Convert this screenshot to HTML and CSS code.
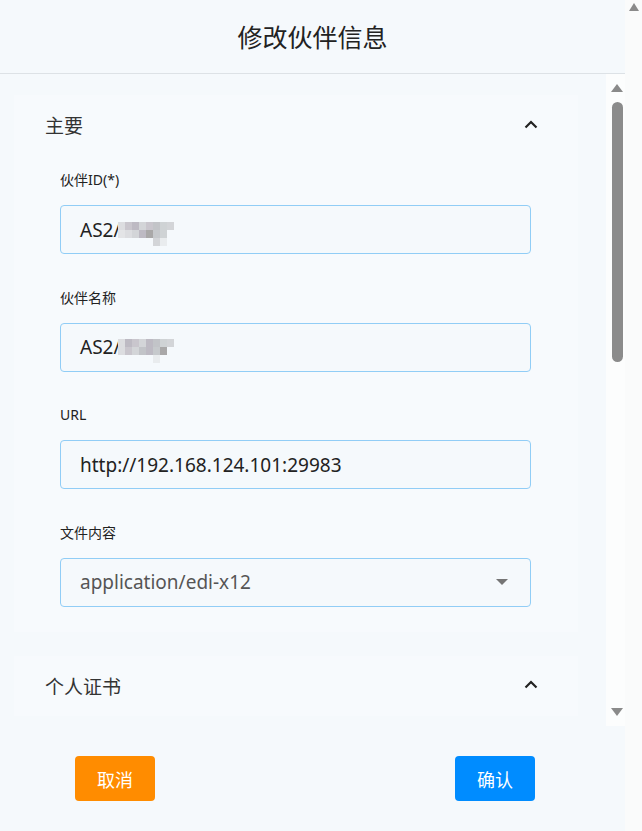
FILE: index.html
```html
<!DOCTYPE html>
<html lang="zh">
<head>
<meta charset="utf-8">
<title>修改伙伴信息</title>
<link rel="stylesheet" href="styles.css">
</head>
<body>
<div class="window">
  <div class="main">
    <header class="header"><h1 class="title">修改伙伴信息</h1></header>
    <div class="scroll-area">
      <div class="content">
        <section class="card">
          <div class="card-head">
            <span class="card-title">主要</span>
            <svg class="chev" width="14" height="9" viewBox="0 0 14 9"><polyline points="1.5,7.5 7,2 12.5,7.5" fill="none" stroke="#222" stroke-width="2.2"/></svg>
          </div>
          <div class="fields">
            <div class="field">
              <label class="label">伙伴ID(*)</label>
              <div class="input"><span class="val">AS2/</span><span class="mosaic"><i class="c1"></i><i class="c2"></i><i class="c3"></i><i class="c4"></i><i class="c2"></i><i class="c5"></i><i class="c6"></i><i class="c4"></i><i class="c7"></i><i class="c1"></i><i class="c4"></i><i class="c3"></i><i class="c8"></i><i class="c9"></i><i class="c6"></i><i class="n"></i><i class="n"></i><i class="n"></i><i class="n"></i><i class="n"></i><i class="n"></i><i class="c4"></i><i class="c10"></i><i class="n"></i></span></div>
            </div>
            <div class="field">
              <label class="label">伙伴名称</label>
              <div class="input"><span class="val">AS2/</span><span class="mosaic"><i class="c1"></i><i class="c3"></i><i class="c2"></i><i class="c4"></i><i class="c3"></i><i class="c5"></i><i class="c6"></i><i class="c4"></i><i class="c1"></i><i class="c2"></i><i class="c4"></i><i class="c5"></i><i class="c3"></i><i class="c9"></i><i class="c8"></i><i class="n"></i><i class="n"></i><i class="n"></i><i class="n"></i><i class="n"></i><i class="n"></i><i class="c10"></i><i class="n"></i><i class="n"></i></span></div>
            </div>
            <div class="field">
              <label class="label">URL</label>
              <div class="input"><span class="val">http://192.168.124.101:29983</span></div>
            </div>
            <div class="field">
              <label class="label">文件内容</label>
              <div class="input select"><span class="val muted">application/edi-x12</span><span class="caret"></span></div>
            </div>
          </div>
        </section>
        <section class="card">
          <div class="card-head">
            <span class="card-title">个人证书</span>
            <svg class="chev" width="14" height="9" viewBox="0 0 14 9"><polyline points="1.5,7.5 7,2 12.5,7.5" fill="none" stroke="#222" stroke-width="2.2"/></svg>
          </div>
        </section>
      </div>
      <div class="vscroll">
        <span class="arrow up"></span>
        <span class="thumb"></span>
        <span class="spacer"></span>
        <span class="arrow down"></span>
      </div>
    </div>
    <footer class="footer">
      <button class="btn cancel">取消</button>
      <button class="btn ok">确认</button>
    </footer>
  </div>
  <div class="outer-scroll"><span class="arrow up small"></span></div>
</div>
</body>
</html>
```

FILE: styles.css
```css
* { box-sizing: border-box; }
html, body { margin: 0; padding: 0; }
body {
  width: 642px;
  height: 831px;
  overflow: hidden;
  background: #f5f9fc;
  font-family: "Noto Sans", "Noto Sans CJK SC", sans-serif;
  color: #333;
}
.window { display: flex; height: 831px; }
.main { width: 625px; display: flex; flex-direction: column; }
.outer-scroll {
  width: 17px;
  background: #fafbfb;
  display: flex;
  flex-direction: column;
  align-items: center;
  padding-top: 3px;
}
.header {
  height: 74px;
  border-bottom: 1px solid #dde2e6;
  display: flex;
  align-items: center;
  justify-content: center;
}
.title {
  margin: 0;
  font-size: 25px;
  font-weight: 400;
  color: #222;
  padding-bottom: 2px;
}
.scroll-area { height: 652px; display: flex; }
.content {
  width: 606px;
  overflow: hidden;
  padding: 21px 0 0 14px;
}
.card {
  width: 564px;
  background: #f7fafd;
  margin-bottom: 24px;
}
.card-head {
  height: 60px;
  display: flex;
  align-items: center;
  justify-content: space-between;
  padding: 0 40px 0 31px;
}
.card-title { font-size: 19px; color: #333; }
.chev { display: block; margin-top: -2px; }
.fields { padding: 0 0 25px 46px; }
.field { padding-top: 15px; }
.field + .field { padding-top: 33.6px; }
.label {
  display: block;
  font-size: 14px;
  line-height: 20px;
  color: #222;
  margin-bottom: 15px;
}
.input {
  width: 471px;
  height: 49px;
  border: 1px solid #91cdf6;
  border-radius: 4px;
  background: #f5f9fc;
  display: flex;
  align-items: center;
  padding: 0 19px;
  font-size: 19px;
  color: #222;
}
.val { white-space: nowrap; }
.muted { color: #555; }
.select { justify-content: space-between; padding-right: 22px; }
.caret {
  width: 0; height: 0;
  border-left: 6px solid transparent;
  border-right: 6px solid transparent;
  border-top: 6px solid #757575;
}
.mosaic {
  display: grid;
  grid-template-columns: repeat(8, 7px);
  grid-auto-rows: 8px;
  margin-left: -3px;
  margin-top: 8px;
}
.mosaic i { display: block; }
.mosaic .n { background: transparent; }
.c1 { background: #dcdde0; }
.c2 { background: #c9c6cd; }
.c3 { background: #bdbac3; }
.c4 { background: #d3d5d8; }
.c5 { background: #c2c4c8; }
.c6 { background: #cfd3d5; }
.c7 { background: #e3e4e6; }
.c8 { background: #a9a8a8; }
.c9 { background: #c6c9cc; }
.c10 { background: #e9ecee; }
.vscroll {
  width: 19px;
  background: #fcfdfd;
  display: flex;
  flex-direction: column;
  align-items: center;
  padding: 10px 0 10px 3px;
}
.arrow { width: 0; height: 0; display: block; }
.arrow.up {
  border-left: 6px solid transparent;
  border-right: 6px solid transparent;
  border-bottom: 8px solid #8a8a8a;
}
.arrow.down {
  border-left: 6px solid transparent;
  border-right: 6px solid transparent;
  border-top: 8px solid #8a8a8a;
}
.arrow.small {
  border-left-width: 5px;
  border-right-width: 5px;
  border-bottom-width: 8px;
}
.thumb {
  width: 11px;
  height: 260px;
  background: #8b8b8b;
  border-radius: 6px;
  margin-top: 10px;
}
.spacer { flex: 1; }
.footer {
  flex: 1;
  display: flex;
  justify-content: space-between;
  align-items: flex-start;
  padding: 30px 90px 0 75px;
}
.btn {
  width: 80px;
  height: 45px;
  border: none;
  border-radius: 4px;
  color: #fff;
  font-size: 18px;
  font-family: "Noto Sans CJK SC", sans-serif;
  padding: 0;
}
.cancel { background: #ff8c00; }
.ok { background: #008cff; }
```
